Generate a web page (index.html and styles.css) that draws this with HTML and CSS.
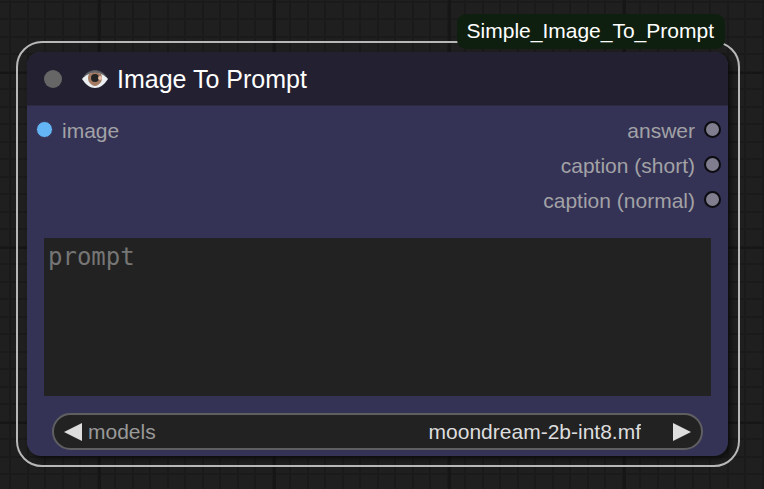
FILE: index.html
```
<!DOCTYPE html>
<html lang="en">
<head>
<meta charset="utf-8">
<title>Image To Prompt</title>
<link rel="stylesheet" href="styles.css">
</head>
<body>
<main class="selection">
  <span class="badge">Simple_Image_To_Prompt</span>
  <article class="node">
    <header class="node-header">
      <span class="collapse-dot"></span>
      <svg class="eye" viewBox="0 0 26 20" aria-hidden="true">
        <path d="M1 9C4 3 9 1 13 1S22 3 25 9L13 6Z" fill="#55555c"/>
        <path d="M0 10C4 5 8 3 13 3S22 5 26 10C22 16 18 19 13 19S4 16 0 10Z" fill="#eceff1"/>
        <path d="M1 9C4 4 8 2 13 2S22 4 25 9C21 5 17 4 13 4S5 5 1 9Z" fill="#66676b"/>
        <path d="M7 5Q13 2 19 5Q21 9 19 13Q16 17 13 17T7 13Q5 9 7 5Z" fill="#a47b62"/>
        <circle cx="13" cy="9" r="4" fill="#242424"/>
        <circle cx="18" cy="9" r="2" fill="#e3bda6"/>
      </svg>
      <h1 class="title">Image To Prompt</h1>
    </header>
    <div class="slots">
      <ul class="slot-list">
        <li class="slot"><span class="port port-image"></span><span class="slot-name">image</span></li>
      </ul>
      <ul class="slot-list outputs">
        <li class="slot"><span class="slot-name">answer</span><span class="port"></span></li>
        <li class="slot"><span class="slot-name">caption (short)</span><span class="port"></span></li>
        <li class="slot"><span class="slot-name">caption (normal)</span><span class="port"></span></li>
      </ul>
    </div>
    <textarea class="prompt" placeholder="prompt" aria-label="prompt"></textarea>
    <div class="combo">
      <button class="arrow" type="button" aria-label="Previous model">
        <svg class="arrow-icon" viewBox="0 0 18 18"><path d="M18 0V18L0 9Z"/></svg>
      </button>
      <label class="combo-label" for="models">models</label>
      <select class="combo-select" id="models">
        <option>moondream-2b-int8.mf</option>
      </select>
      <button class="arrow" type="button" aria-label="Next model">
        <svg class="arrow-icon" viewBox="0 0 18 18"><path d="M0 0V18L18 9Z"/></svg>
      </button>
    </div>
  </article>
</main>
</body>
</html>
```
FILE: styles.css
```
* {
  box-sizing: border-box;
}

body {
  min-height: 100vh;
  margin: 0;
  padding: 41px 24px 22px 16px;
  font-family: "Liberation Sans", Arial, sans-serif;
  font-size: 21px;
  line-height: 24px;
  color: #a2a2a6;
  background-color: #1f1f1f;
  background-image:
    linear-gradient(90deg, #161616 3px, transparent 3px),
    linear-gradient(#161616 2px, transparent 2px),
    linear-gradient(90deg, #1a1a1a 2px, transparent 2px 17px, #1a1a1a 17px 19px, transparent 19px),
    linear-gradient(#1a1a1a 2px, transparent 2px 17px, #1a1a1a 17px 19px, transparent 19px);
  background-size: 175px 175px, 175px 175px, 35px 35px, 35px 35px;
  background-position: 98px 72px, 98px 72px, 27px 1px, 27px 1px;
}

.selection {
  position: relative;
  padding: 9px 10px 9px 9px;
  border: 2px solid #b8b8b8;
  border-radius: 26px;
}

.badge {
  position: absolute;
  top: -29px;
  right: 13px;
  padding: 5px 11px 6px 10px;
  border-radius: 9px;
  color: #fff;
  background: #0f1f0f;
}

.node {
  padding-bottom: 6px;
  border-radius: 14px;
  background: #353355;
  box-shadow: 3px 3px 5px rgba(0, 0, 0, 0.5);
}

.node-header {
  display: flex;
  align-items: center;
  height: 54px;
  padding: 0 17px;
  border-bottom: 1px solid #2c2a43;
  border-radius: 14px 14px 0 0;
  background: #232131;
}

.collapse-dot {
  width: 18px;
  height: 18px;
  border-radius: 50%;
  background: #666;
}

.eye {
  width: 26px;
  height: 20px;
  margin: 0 9px 0 20px;
}

.title {
  margin: 0;
  font-size: 25px;
  font-weight: 400;
  line-height: 28px;
  color: #fff;
}

.slots {
  display: flex;
  justify-content: space-between;
  padding: 6px 7px 0 9px;
}

.slot-list {
  margin: 0;
  padding: 0;
  list-style: none;
}

.slot {
  display: flex;
  align-items: center;
  gap: 9px;
  height: 35px;
}

.slot-name {
  padding-top: 2px;
}

.outputs .slot {
  justify-content: flex-end;
}

.port {
  width: 17px;
  height: 17px;
  border: 2px solid #0b0b10;
  border-radius: 50%;
  background: #7f7d8e;
}

.port-image {
  border-width: 1px;
  border-color: #353355;
  background: #64b5f6;
}

.prompt {
  display: block;
  width: calc(100% - 34px);
  height: 158px;
  margin: 21px 17px 17px;
  padding: 5px 4px;
  border: 0;
  outline: 0;
  resize: none;
  font-family: "DejaVu Sans Mono", monospace;
  font-size: 24px;
  line-height: 28px;
  color: #ddd;
  background: #222;
}

.prompt::placeholder {
  color: #757575;
}

.combo {
  display: flex;
  align-items: center;
  height: 37px;
  margin: 0 25px;
  padding: 0 10px;
  border: 2px solid #5f5f61;
  border-radius: 19px;
  background: #222;
}

.arrow {
  display: flex;
  padding: 0;
  border: 0;
  background: none;
}

.arrow-icon {
  width: 18px;
  height: 18px;
  fill: #ddd;
}

.combo-label {
  margin-left: 6px;
  color: #999;
}

.combo-select {
  flex: 1;
  height: 28px;
  margin: 0 32px 0 8px;
  padding: 0;
  border: 0;
  outline: 0;
  appearance: none;
  font-family: inherit;
  font-size: 21px;
  text-align-last: right;
  color: #ddd;
  background: none;
}
```
